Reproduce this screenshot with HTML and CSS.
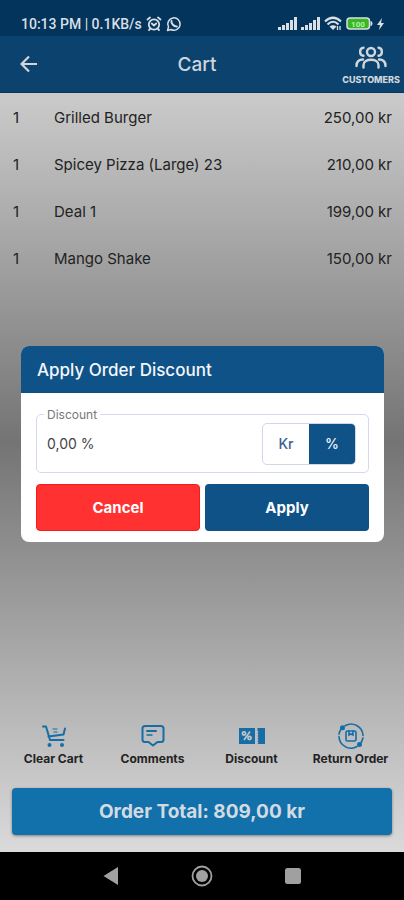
FILE: index.html
```html
<!DOCTYPE html>
<html lang="en">
<head>
<meta charset="utf-8">
<meta name="viewport" content="width=device-width, initial-scale=1">
<title>Cart</title>
<link rel="stylesheet" href="styles.css">
</head>
<body>
<div class="status">
  <span class="status-text">10:13 PM | 0.1KB/s</span>
  <svg width="16" height="16" viewBox="0 0 16 16" fill="none" stroke="currentColor" stroke-width="1.8" stroke-linecap="round"><circle cx="8" cy="8.5" r="5.2"/><path d="M1.5 3.5 4 1.5M14.5 3.5 12 1.5M5.8 7.5 8 9.5l2.200-2M4 13l-1 1M12 13l1 1"/></svg>
  <svg class="chat" width="16" height="16" viewBox="0 0 16 16" fill="none" stroke="currentColor" stroke-width="1.5" stroke-linejoin="round" stroke-linecap="round"><path d="M1.500 14.500 2.500 11A6.200 6.200 0 1 1 5 13.500Z"/><path d="M5.500 5C5 7.500 8 10.800 10.800 10.500" stroke-width="2"/></svg>
  <span class="spacer"></span>
  <svg width="19" height="13" viewBox="0 0 19 13" fill="currentColor"><path d="M0 10h3v3H0zM4 8h3v5H4zM8 6h3v7H8zM12 3h3v10h-3zM16 0h3v13h-3z"/></svg>
  <svg width="19" height="13" viewBox="0 0 19 13" fill="currentColor"><path d="M0 10h3v3H0zM4 8h3v5H4zM8 6h3v7H8zM12 3h3v10h-3zM16 0h3v13h-3z"/></svg>
  <svg width="18" height="15" viewBox="0 0 18 15" fill="none" stroke="currentColor" stroke-width="2.200"><path d="M1 5.500Q9-2 17 5.500M3.500 8.500Q9 3 14.500 8.500"/><path d="M9 14 5.500 10.500Q9 8 12.500 10.500Z" fill="currentColor" stroke="none"/><path d="M13.500 10v4M16 10v4" stroke-width="1.300"/></svg>
  <svg class="battery" width="27" height="13" viewBox="0 0 27 13"><rect x="1" y="1" width="22.500" height="11" rx="3" fill="#38b722" stroke="#d9dfe5" stroke-width="1.500"/><path d="M24.500 4q2 0 2 2.500t-2 2.500z" fill="#d9dfe5"/><text x="12" y="9.500" text-anchor="middle" class="charge">100</text></svg>
  <svg width="7" height="12" viewBox="0 0 7 12" fill="currentColor"><path d="M5 0 0 7h3L2 12l5-7H4Z"/></svg>
</div>

<div class="app">
  <header class="topbar">
    <button class="back" type="button" aria-label="Back"><svg width="18" height="18" viewBox="0 0 18 18" fill="none" stroke="currentColor" stroke-width="2.200"><path d="M17 9H2M9 1.500 1.500 9 9 16.500"/></svg></button>
    <h1>Cart</h1>
    <button class="customers" type="button">
      <svg width="32" height="23" viewBox="0 0 32 23" fill="none" stroke="currentColor" stroke-width="2.400" stroke-linecap="round"><circle cx="16" cy="6" r="4"/><path d="M8.500 1.700C4 2 4 9.500 8.500 9.800M23.500 1.700C28 2 28 9.500 23.500 9.800M8.500 21.500v-2.500c0-7 15-7 15 0v2.500M1.500 20c0-4.500 2.500-6.500 6.500-6.500M30.500 20c0-4.500-2.500-6.500-6.500-6.500"/></svg>
      <span>CUSTOMERS</span>
    </button>
  </header>

  <main class="cart">
    <ul class="items">
      <li><span class="qty">1</span><span class="name">Grilled Burger</span><span>250,00 kr</span></li>
      <li><span class="qty">1</span><span class="name">Spicey Pizza (Large) 23</span><span>210,00 kr</span></li>
      <li><span class="qty">1</span><span class="name">Deal 1</span><span>199,00 kr</span></li>
      <li><span class="qty">1</span><span class="name">Mango Shake</span><span>150,00 kr</span></li>
    </ul>

    <div class="actions">
      <button type="button">
        <svg width="26" height="26" viewBox="0 0 26 26" fill="none" stroke="currentColor" stroke-width="2" stroke-linecap="round" stroke-linejoin="round"><path d="M2 3.500h3l4 13.500h13.500M7.500 13.500 22.500 11.500 24 5.500"/><path d="M12 6h4M13 9h3" stroke-width="1.200"/><circle cx="8.500" cy="22" r="1"/><circle cx="21" cy="22" r="1"/></svg>
        <span>Clear Cart</span>
      </button>
      <button type="button">
        <svg width="26" height="26" viewBox="0 0 26 26" fill="none" stroke="currentColor" stroke-width="2" stroke-linecap="round" stroke-linejoin="round"><path d="M5 3h16q2.500 0 2.500 2.500v11q0 2.500-2.500 2.500h-3.500L13 22.500 8.500 19H5q-2.500 0-2.500-2.500v-11Q2.500 3 5 3Z"/><path d="M7 8h9"/><path d="M7 12h5" stroke-width="1.400"/></svg>
        <span>Comments</span>
      </button>
      <button type="button">
        <svg width="26" height="26" viewBox="0 0 26 26"><path d="M0 5h16v16H0zM18.500 5H26v16h-7.500l1-1.300-1-1.400 1-1.300-1-1.400 1-1.300-1-1.300 1-1.300-1-1.400 1-1.300-1-1.300Z" fill="currentColor"/><g fill="none" stroke="#c0c4c7" stroke-width="1.700"><circle cx="5" cy="10.500" r="1.600"/><circle cx="10.500" cy="15" r="1.600"/><path d="M11 8.500 5 17"/></g></svg>
        <span>Discount</span>
      </button>
      <button type="button">
        <svg width="26" height="26" viewBox="0 0 26 26" fill="none" stroke="currentColor" stroke-width="1.600" stroke-linecap="round"><path d="M7 2.700A12 12 0 0 1 25 12.500M25 15Q24.300 18.500 21.500 21.500M19 23.500A12 12 0 0 1 1 13.500M1 11Q1.500 8 3.500 5.500"/><rect x="8" y="8" width="10" height="10" rx="1.500"/><path d="M11 8v4l2-1 2 1V8"/><circle cx="4.500" cy="4.800" r="1.700" fill="currentColor"/><circle cx="21.500" cy="21.500" r="1.700" fill="currentColor"/></svg>
        <span>Return Order</span>
      </button>
    </div>
    <button class="total" type="button">Order Total: 809,00 kr</button>
  </main>

  <div class="overlay">
    <form class="dialog" role="dialog" aria-labelledby="dialog-title">
      <h2 id="dialog-title">Apply Order Discount</h2>
      <div class="dialog-body">
        <div class="field">
          <label for="discount">Discount</label>
          <input id="discount" type="text" value="0,00 %">
          <div class="units">
            <button type="button">Kr</button>
            <button type="button" class="active" aria-pressed="true">%</button>
          </div>
        </div>
        <div class="buttons">
          <button type="button" class="cancel">Cancel</button>
          <button type="button" class="apply">Apply</button>
        </div>
      </div>
    </form>
  </div>
</div>

<nav class="system">
  <button type="button" aria-label="Back"><svg width="22" height="22" viewBox="0 0 22 22" fill="currentColor"><path d="M18 2v18L3.500 11Z"/></svg></button>
  <button type="button" aria-label="Home"><svg width="22" height="22" viewBox="0 0 22 22"><circle cx="11" cy="11" r="9.500" fill="none" stroke="currentColor" stroke-width="1.800"/><circle cx="11" cy="11" r="6" fill="currentColor"/></svg></button>
  <button type="button" aria-label="Recent apps"><svg width="22" height="22" viewBox="0 0 22 22" fill="currentColor"><rect x="3" y="3" width="16" height="16" rx="2.500"/></svg></button>
</nav>
</body>
</html>
```
FILE: styles.css
```css
* { box-sizing: border-box; }
body {
  margin: 0;
  min-height: 100vh;
  display: flex;
  flex-direction: column;
  font-family: Inter, "Liberation Sans", sans-serif;
  color: #222;
}
button, input { font: inherit; color: inherit; border: 0; padding: 0; background: none; }
h1, h2, ul { margin: 0; padding: 0; }
h1, h2 { font-weight: 500; }
svg { display: block; flex: none; }

.status {
  height: 36px;
  padding: 11px 20px 0 21px;
  display: flex;
  align-items: center;
  gap: 4px;
  background: #03345b;
  color: #d9dfe5;
}
.status-text { font: 500 14px/20px Roboto, sans-serif; }
.spacer { flex: 1; }
.charge { font: 700 8px Roboto, sans-serif; fill: #b9efb0; }

.app { flex: 1; display: flex; flex-direction: column; position: relative; }

.topbar {
  height: 57px;
  display: grid;
  grid-template-columns: 1fr auto 1fr;
  align-items: center;
  background: #0b436e;
  border-bottom: 1px solid #0a355a;
  color: #d0d6db;
}
.topbar h1 { font-size: 19px; padding-right: 10px; }
.back { justify-self: start; margin-left: 20px; }
.customers {
  justify-self: end;
  padding: 3px 4px 0 0;
  display: flex;
  flex-direction: column;
  align-items: center;
  gap: 5px;
  font-size: 9px;
  line-height: 12px;
  font-weight: 800;
}

.cart {
  flex: 1;
  display: flex;
  flex-direction: column;
  background: linear-gradient(#cbcbcb, #747474 46%, #dadada);
}
.items { list-style: none; padding: 1px 12px 0 13px; flex: 1; }
.items li { display: flex; height: 47px; align-items: center; font-size: 15px; }
.qty { width: 41px; }
.name { flex: 1; }

.actions { display: grid; grid-template-columns: repeat(4, 1fr); padding: 0 4px; }
.actions button {
  display: flex;
  flex-direction: column;
  align-items: center;
  gap: 2px;
  font-size: 12px;
  line-height: 16px;
  font-weight: 700;
}
.actions svg { color: #176da6; }
.total {
  margin: 21px 12px 17px;
  height: 47px;
  border-radius: 4px;
  background: #1270aa;
  color: #d3dbe2;
  font-size: 19px;
  font-weight: 700;
  box-shadow: 0 1px 3px #0006;
}

.overlay {
  position: absolute;
  inset: 0;
  padding: 0 20px 0 21px;
  display: flex;
  align-items: center;
}
.dialog { flex: 1; background: #fff; border-radius: 8px; overflow: hidden; }
.dialog h2 {
  padding: 1px 16px 0;
  background: #0f5288;
  color: #f5f7fb;
  font-size: 17px;
  line-height: 46px;
}
.dialog-body { padding: 21px 15px 11px; }
.field {
  position: relative;
  display: flex;
  align-items: center;
  height: 59px;
  padding: 0 12px 0 10px;
  border: 1px solid #d5d9ec;
  border-radius: 5px;
}
.field label {
  position: absolute;
  top: -8px;
  left: 7px;
  padding: 0 3px;
  background: #fff;
  color: #777;
  font-size: 12px;
  line-height: 16px;
}
.field input { flex: 1; min-width: 0; font-size: 14px; color: #444; }
.units {
  display: flex;
  border: 1px solid #cfd8e8;
  border-radius: 5px;
  overflow: hidden;
}
.units button { width: 46px; height: 40px; font-size: 14px; font-weight: 500; color: #3c628f; }
.units .active { background: #0f5288; color: #eef3f8; }
.buttons { display: grid; grid-template-columns: 1fr 1fr; gap: 5px; margin-top: 11px; }
.buttons button { height: 47px; border-radius: 4px; color: #fff; font-size: 15px; font-weight: 700; }
.buttons .cancel { background: #ff3131; border: 1px solid #f21c20; }
.buttons .apply { background: #0f5288; }

.system {
  height: 48px;
  padding: 0 65px;
  display: grid;
  grid-template-columns: repeat(3, 1fr);
  place-items: center;
  background: #000;
  color: #a0a0a0;
}
```
